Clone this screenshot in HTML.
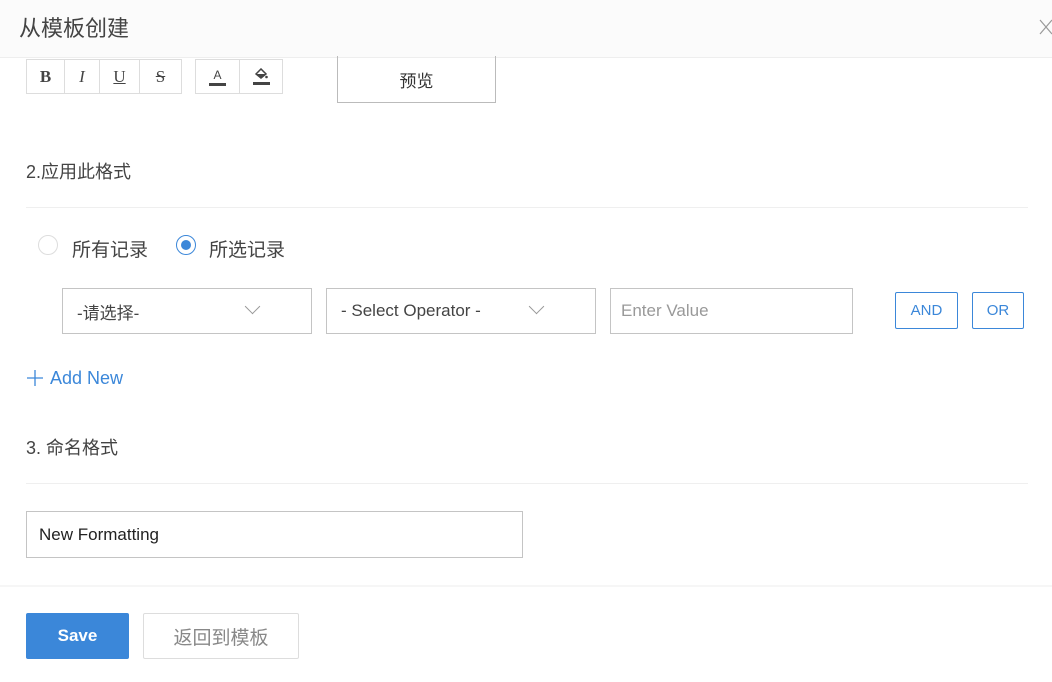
<!DOCTYPE html>
<html><head><meta charset="utf-8"><style>
*{box-sizing:border-box;margin:0;padding:0}
body{width:1052px;height:682px;background:#fff;position:relative;overflow:hidden;font-family:"Liberation Sans","Noto Sans CJK SC",sans-serif;color:#333}
.a{position:absolute}
.hdr{left:0;top:0;width:1052px;height:58px;background:#fbfbfb;border-bottom:1px solid #eee}
.tb{top:59px;height:35px;border:1px solid #ddd;background:#fff;display:flex}
.tb div{border-right:1px solid #ddd;display:flex;align-items:center;justify-content:center;font-family:"Liberation Serif",serif;font-size:17px;color:#444}
.tb div:last-child{border-right:none}
.box{border:1px solid #c4c4c4;background:#fff;font-size:17px;display:flex;align-items:center;padding-left:14px;color:#444}
.hr{height:1px;background:#efefef;left:26px;width:1002px}
.btn{border:1px solid #3b87d9;border-radius:2px;color:#3b87d9;font-size:15px;display:flex;align-items:center;justify-content:center}
.chev{position:absolute;width:11px;height:11px;border-right:1.3px solid #999;border-bottom:1.3px solid #999;transform:rotate(45deg)}
</style></head><body>
<div class="a hdr"></div>
<div class="a" style="left:19px;top:11px;font-size:22px;color:#444">从模板创建</div>
<svg class="a" style="left:1039px;top:19px" width="14" height="16"><path d="M1 1L13 15M13 1L1 15" stroke="#999" stroke-width="1.2"/></svg>
<div class="a tb" style="left:26px;width:156px">
<div style="width:38px;font-weight:bold">B</div><div style="width:35px;font-style:italic">I</div><div style="width:40px;text-decoration:underline">U</div><div style="width:41px;text-decoration:line-through">S</div></div>
<div class="a tb" style="left:195px;width:88px">
<div style="width:44px;flex-direction:column;font-family:'Liberation Sans';font-size:12px"><span>A</span><span style="width:17px;height:3px;background:#444;margin-top:1px"></span></div>
<div style="width:42px;flex-direction:column"><svg width="14" height="12"><path d="M2 6L7 1L12 6L7 10Z" fill="none" stroke="#444" stroke-width="1.5"/><path d="M3 6H11L7 10Z" fill="#444"/><circle cx="12.5" cy="9" r="1.3" fill="#444"/></svg><span style="width:17px;height:3px;background:#444;margin-top:2px"></span></div></div>
<div class="a" style="left:337px;top:56px;width:159px;height:47px;border:1px solid #bbb;border-top:none;display:flex;align-items:center;justify-content:center;font-size:17px;color:#333">预览</div>
<div class="a" style="left:26px;top:158px;font-size:18px;color:#444">2.应用此格式</div>
<div class="a hr" style="top:207px"></div>
<div class="a" style="left:38px;top:235px;width:20px;height:20px;border:1px solid #ddd;border-radius:50%"></div>
<div class="a" style="left:72px;top:235px;font-size:19px;color:#444">所有记录</div>
<div class="a" style="left:176px;top:235px;width:20px;height:20px;border:1px solid #3b87d9;border-radius:50%"><div style="margin:4px;width:10px;height:10px;border-radius:50%;background:#3b87d9"></div></div>
<div class="a" style="left:209px;top:235px;font-size:19px;color:#444">所选记录</div>
<div class="a box" style="left:62px;top:288px;width:250px;height:46px">-请选择-<div class="chev" style="left:184px;top:12px"></div></div>
<div class="a box" style="left:326px;top:288px;width:270px;height:46px">- Select Operator -<div class="chev" style="left:204px;top:12px"></div></div>
<div class="a box" style="left:610px;top:288px;width:243px;height:46px;color:#999;padding-left:10px">Enter Value</div>
<div class="a btn" style="left:895px;top:292px;width:63px;height:37px">AND</div>
<div class="a btn" style="left:972px;top:292px;width:52px;height:37px">OR</div>
<svg class="a" style="left:26px;top:369px" width="18" height="18"><path d="M9 1V17M1 9H17" stroke="#3b87d9" stroke-width="1.3"/></svg>
<div class="a" style="left:50px;top:368px;font-size:18px;color:#3b87d9">Add New</div>
<div class="a" style="left:26px;top:434px;font-size:18px;color:#444">3. 命名格式</div>
<div class="a hr" style="top:483px"></div>
<div class="a box" style="left:26px;top:511px;width:497px;height:47px;color:#222;padding-left:12px">New Formatting</div>
<div class="a" style="left:0;top:585px;width:1052px;height:2px;background:#f6f6f6"></div>
<div class="a" style="left:26px;top:613px;width:103px;height:46px;background:#3b87d9;border-radius:2px;color:#fff;font-size:17px;font-weight:bold;display:flex;align-items:center;justify-content:center">Save</div>
<div class="a" style="left:143px;top:613px;width:156px;height:46px;border:1px solid #ddd;border-radius:2px;color:#888;font-size:19px;display:flex;align-items:center;justify-content:center">返回到模板</div>
</body></html>
